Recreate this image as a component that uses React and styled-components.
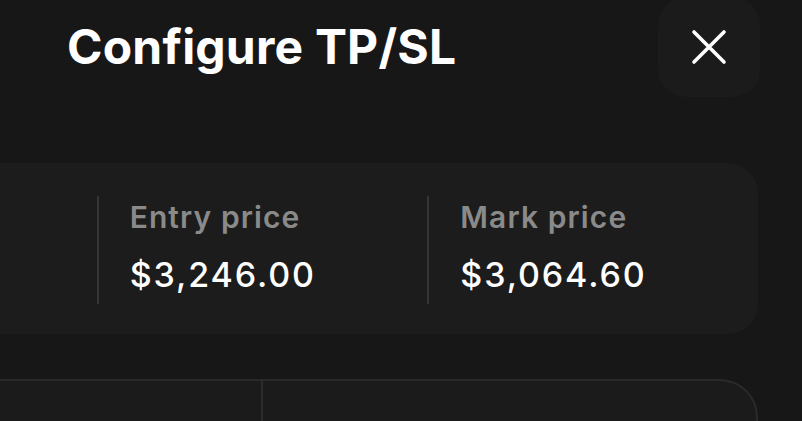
import React from "react";
import styled, { createGlobalStyle } from "styled-components";

const Global = createGlobalStyle`
  html, body {
    margin: 0;
    padding: 0;
    background: #171717;
    overflow: hidden;
  }
  body {
    font-family: Inter, "Liberation Sans", sans-serif;
    color: #ffffff;
  }
`;

const Modal = styled.div`
  width: 802px;
  height: 421px;
  overflow: hidden;
  background: #171717;
  display: flex;
  flex-direction: column;
`;

const Header = styled.div`
  display: flex;
  align-items: center;
  justify-content: space-between;
  height: 100px;
  margin-top: -3px;
  padding: 0 42px 0 67px;
`;

const Title = styled.h2`
  margin: 0;
  font-family: Inter, "Liberation Sans", sans-serif;
  font-weight: 700;
  font-size: 48px;
  line-height: 58px;
  letter-spacing: 0.2px;
  color: #ffffff;
`;

const CloseButton = styled.button`
  width: 102px;
  height: 100px;
  border: none;
  border-radius: 28px;
  background: #1b1b1b;
  display: flex;
  align-items: center;
  justify-content: center;
  padding: 0;
  cursor: pointer;
`;

const Body = styled.div`
  margin-left: -234px;
  width: 992px;
  display: flex;
  flex-direction: column;
`;

const StatCard = styled.div`
  margin-top: 66px;
  display: grid;
  grid-template-columns: repeat(3, 1fr);
  background: #1c1c1c;
  border-radius: 30px;
  padding: 33px 0 30px;
`;

const Stat = styled.div`
  display: flex;
  flex-direction: column;
  gap: 20px;
  min-height: 96px;
  padding: 3px 0 9px 31px;
  border-left: 2px solid ${(p) => (p.$first ? "transparent" : "#353535")};
`;

const Label = styled.div`
  font-size: 30px;
  line-height: 36px;
  font-weight: 600;
  color: #8a8a8a;
  letter-spacing: 1.1px;
`;

const Value = styled.div`
  font-size: 34px;
  line-height: 40px;
  font-weight: 500;
  color: #ffffff;
  letter-spacing: 1.9px;
`;

const Panel = styled.div`
  margin-top: 45px;
  display: grid;
  grid-template-columns: 1fr 1fr;
  height: 120px;
  background: #1b1b1b;
  border-top: 2px solid #2a2a2a;
  border-right: 2px solid #2a2a2a;
  border-top-right-radius: 38px;
`;

const PanelCell = styled.div`
  border-left: 2px solid ${(p) => (p.$first ? "transparent" : "#2c2c2c")};
`;

const stats = [
  { label: "Entry price", value: "$3,246.00" },
  { label: "Mark price", value: "$3,064.60" },
];

export default function App() {
  return (
    <>
      <Global />
      <Modal>
        <Header>
          <Title>Configure TP/SL</Title>
          <CloseButton aria-label="Close">
            <svg width="36" height="36" viewBox="0 0 36 36" fill="none">
              <path
                d="M3 3 L33 33 M33 3 L3 33"
                stroke="#ffffff"
                strokeWidth="3.6"
                strokeLinecap="round"
              />
            </svg>
          </CloseButton>
        </Header>
        <Body>
          <StatCard>
            <Stat $first />
            {stats.map((s) => (
              <Stat key={s.label}>
                <Label>{s.label}</Label>
                <Value>{s.value}</Value>
              </Stat>
            ))}
          </StatCard>
          <Panel>
            <PanelCell $first />
            <PanelCell />
          </Panel>
        </Body>
      </Modal>
    </>
  );
}
